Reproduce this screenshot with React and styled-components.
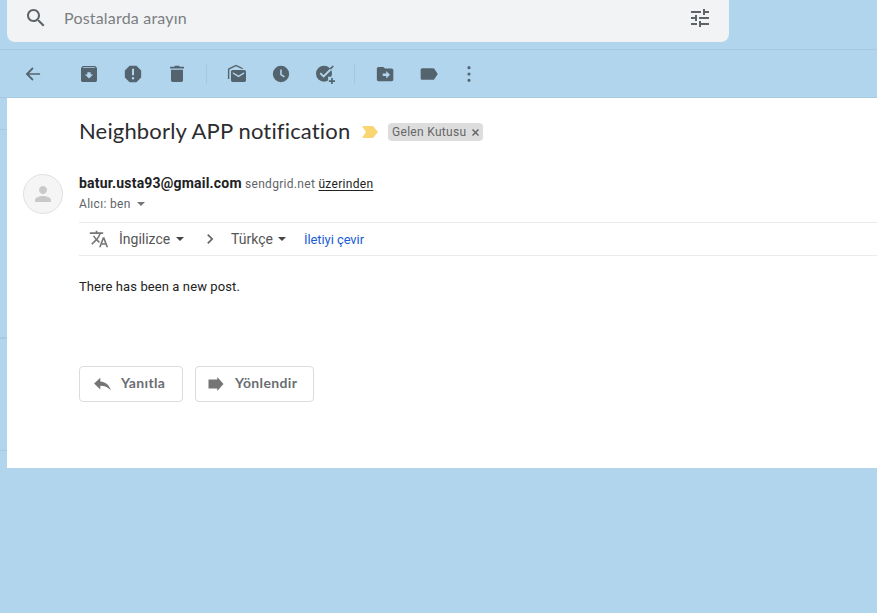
import React from "react";
import styled, { createGlobalStyle } from "styled-components";

const Global = createGlobalStyle`
  * { box-sizing: border-box; }
  body { margin: 0; background: #b1d5ed; font-family: Roboto, "Liberation Sans", sans-serif; overflow: hidden; }
`;

const Page = styled.div`
  width: 877px;
  height: 613px;
  background: #b1d5ed;
  overflow: hidden;
`;

const Header = styled.header`
  height: 50px;
  padding-left: 7px;
  border-bottom: 1px solid #a6c9e0;
`;

const SearchBox = styled.div`
  display: flex;
  align-items: center;
  width: 722px;
  height: 42px;
  padding: 0 17px 6px;
  border-radius: 0 0 8px 8px;
  background: #f1f3f4;
`;

const SearchText = styled.span`
  flex: 1;
  margin-left: 16px;
  font: 400 16px/24px Lato, sans-serif;
  letter-spacing: 0.2px;
  color: #7b7e82;
`;

const Svg = styled.svg`
  display: block;
  flex: none;
  width: ${(p) => p.$size}px;
  height: ${(p) => p.$size}px;
  fill: ${(p) => p.$color};
`;

const Toolbar = styled.nav`
  display: flex;
  align-items: center;
  height: 48px;
  padding-left: 11px;
  border-bottom: 1px solid #a6c9e0;
`;

const ToolButton = styled.button`
  display: flex;
  align-items: center;
  justify-content: center;
  width: ${(p) => p.$width || 44}px;
  height: 40px;
  margin: 0 ${(p) => p.$after || 0}px 0 0;
  padding: 0;
  border: 0;
  background: none;
`;

const Divider = styled.i`
  width: 1px;
  height: 20px;
  margin: 0 8px 0 7px;
  background: #a4c7df;
`;

const Main = styled.div`
  display: flex;
  height: 370px;
`;

const Rail = styled.aside`
  width: 7px;
  padding-top: 31px;
`;

const RailSection = styled.div`
  height: ${(p) => p.$height}px;
  border-top: ${(p) => p.$line || 1}px solid #a6c9e0;
`;

const Message = styled.main`
  flex: 1;
  padding-top: 16px;
  background: #fff;
`;

const SubjectRow = styled.div`
  display: flex;
  align-items: center;
  height: 36px;
  padding-left: 72px;
`;

const Subject = styled.h1`
  width: 283px;
  margin: 0;
  padding-bottom: 2px;
  font: 400 22px/28px Lato, sans-serif;
  letter-spacing: 0.16px;
  color: #2b2c2f;
  white-space: nowrap;
`;

const Importance = styled.svg`
  width: 16px;
  height: 12px;
  margin-right: 10px;
  fill: #f9d574;
`;

const Chip = styled.span`
  display: flex;
  align-items: center;
  width: 95px;
  height: 18px;
  padding: 0 4px;
  border-radius: 4px;
  background: #ddd;
  color: #666;
  font-size: 12px;
  letter-spacing: 0.3px;
  white-space: nowrap;
`;

const ChipClose = styled.svg`
  width: 7px;
  height: 7px;
  margin-left: auto;
  stroke: #666;
  stroke-width: 1.5;
`;

const SenderRow = styled.div`
  display: flex;
  height: 72px;
  padding: 24px 0 0 16px;
`;

const Avatar = styled.div`
  display: flex;
  align-items: center;
  justify-content: center;
  width: 40px;
  height: 40px;
  margin-right: 16px;
  border: 1px solid #e0e0e0;
  border-radius: 50%;
  background: #f5f5f5;
`;

const SenderLine = styled.div`
  height: 20px;
  font-size: 12px;
  line-height: 18px;
  letter-spacing: 0.3px;
  color: #5f6368;
  white-space: nowrap;
`;

const SenderName = styled.b`
  font-size: 14px;
  font-weight: 700;
  letter-spacing: 0.2px;
  color: #202124;
`;

const Via = styled.u`
  color: #222;
  text-underline-offset: 2px;
`;

const Recipient = styled.div`
  display: flex;
  align-items: center;
  gap: 6px;
  height: 20px;
  font-size: 12px;
  letter-spacing: 0.3px;
  color: #5f6368;
`;

const Caret = styled.i`
  border: 4px solid transparent;
  border-top-color: ${(p) => p.$color || "#444"};
  border-bottom: 0;
`;

const TranslateBar = styled.div`
  display: flex;
  align-items: center;
  height: 34px;
  margin-left: 72px;
  padding-left: 10px;
  border-top: 1px solid #ebebeb;
  border-bottom: 1px solid #ebebeb;
`;

const Language = styled.span`
  display: flex;
  align-items: center;
  justify-content: space-between;
  width: ${(p) => p.$width}px;
  margin-left: ${(p) => p.$before}px;
  font-size: 14px;
  color: #555;
`;

const TranslateLink = styled.a`
  margin-left: 18px;
  font-size: 13px;
  letter-spacing: -0.08px;
  color: #1a5cd6;
`;

const Body = styled.p`
  height: 110px;
  margin: 0;
  padding: 21px 0 0 72px;
  font-size: 13px;
  line-height: 20px;
  letter-spacing: 0.1px;
  color: #222;
`;

const Actions = styled.div`
  display: flex;
  gap: 12px;
  padding-left: 72px;
`;

const ActionButton = styled.button`
  display: flex;
  align-items: center;
  width: ${(p) => p.$width}px;
  height: 36px;
  padding: 0 0 0 ${(p) => p.$inset}px;
  border: 1px solid #dadce0;
  border-radius: 4px;
  background: #fff;
  color: #6a6e72;
  font: 700 14px/20px Lato, sans-serif;
  letter-spacing: 0.35px;
`;

const ActionLabel = styled.span`
  margin-left: 9px;
  padding-bottom: 2px;
`;

const PATHS = {
  search: "M15.5 14h-.79l-.28-.27C15.41 12.59 16 11.11 16 9.5 16 5.91 13.09 3 9.5 3S3 5.91 3 9.5 5.91 16 9.5 16c1.61 0 3.09-.59 4.23-1.57l.27.28v.79l5 4.99L20.49 19l-4.99-5zm-6 0C7.01 14 5 11.99 5 9.5S7.01 5 9.5 5 14 7.01 14 9.5 11.99 14 9.5 14z",
  tune: "M3 5h10v2H3zM15 3h2v2h4v2h-4v2h-2zM3 11h4V9h2v6H7v-2H3zM11 11h10v2H11zM3 17h6v2H3zM11 15h2v2h8v2h-8v2h-2z",
  back: "M20.500 11H7.300l5.300-5.300L11.200 4l-8 8 8 8 1.400-1.700L7.300 13h13.200z",
  archive: "M19.500 2.400h-15L2.400 4.800v14.600c0 1.200 1 2.200 2.200 2.200h14.800c1.200 0 2.200-1 2.200-2.200V4.800zM12 17.500l-5-5h3V9.800h4v2.700h3zM4.400 4.800l.8-.9h13.600l.8.9z",
  spam: "M16.1 2.200H7.900L2.200 7.900v8.200l5.700 5.700h8.200l5.700-5.700V7.900zM13.200 5.800v7.700h-2.400V5.800zM12 18.600a1.500 1.500 0 1 1 0-3 1.500 1.500 0 0 1 0 3z",
  trash: "M4.800 19.600c0 1.100.9 2 2 2h10.400c1.100 0 2-.9 2-2V7H4.800zM15.500 3.200l-1-1h-5l-1 1H3.600v2.200h16.800V3.200z",
  unread: "M19.500 5.700v-.5L10.800 1 2 5.200c-.6.300-.9.800-.9 1.500v11.400h1.700V6.500l8-3.800 6.300 3zM20.800 7.200h-14c-1.100 0-2 .9-2 2v10.400c0 1.100.9 2 2 2h14c1.100 0 2-.9 2-2V9.200c0-1.100-.9-2-2-2zm-.2 4.600-6.800 4-6.800-4v-2l6.800 4 6.800-4z",
  snooze: "M12 2.200a9.800 9.800 0 1 0 0 19.600 9.800 9.800 0 0 0 0-19.600zM15.500 16.200 11 13.200V6.500h1.900v5.700l3.800 2.500z",
  move: "M20 5.500h-8l-2-2H4.200c-1.100 0-2 .9-2 2v13.200c0 1.100.9 2 2 2H20c1.100 0 2-.9 2-2V7.500c0-1.100-.9-2-2-2zM13.500 17.500v-3H9.300v-3h4.200v-3L18 13z",
  label: "M16.800 5H4c-1.100 0-2 .9-2 2v10c0 1.100.9 2 2 2h12.800c.7 0 1.300-.3 1.600-.8L22.500 12l-4.100-6.200c-.3-.5-.9-.8-1.600-.8z",
  more: "M12 6.300a1.900 1.900 0 1 0 0-3.800 1.900 1.900 0 0 0 0 3.800zM12 13.900a1.900 1.900 0 1 0 0-3.800 1.900 1.900 0 0 0 0 3.800zM12 21.500a1.900 1.900 0 1 0 0-3.800 1.900 1.900 0 0 0 0 3.800z",
  person: "M12 12c2.210 0 4-1.790 4-4s-1.790-4-4-4-4 1.790-4 4 1.790 4 4 4zm0 2c-2.670 0-8 1.340-8 4v2h16v-2c0-2.660-5.330-4-8-4z",
  translate: "M12.870 15.070l-2.540-2.510.03-.03c1.740-1.940 2.980-4.170 3.710-6.530H17V4h-7V2H8v2H1v1.990h11.170C11.500 7.920 10.440 9.750 9 11.350 8.070 10.320 7.300 9.190 6.690 8h-2c.73 1.630 1.730 3.170 2.980 4.560l-5.090 5.020L4 19l5-5 3.110 3.110.76-2.040zM18.500 10h-2L12 22h2l1.120-3h4.750L21 22h2l-4.500-12zm-2.620 7l1.620-4.330L19.120 17h-3.240z",
  chevron: "M10 6 8.590 7.410 13.170 12l-4.580 4.590L10 18l6-6z",
  reply: "M10 9V4.500L2.500 11.500l7.500 7V14c5 0 9 1.300 12.500 5.500C21 14 17 9.500 10 9z",
  forward: "M3 6.500h10.500V3.500l7.500 8.500-7.500 8.500v-3H3z",
};

function Icon({ name, size = 20, color = "#54646f" }) {
  return (
    <Svg viewBox="0 0 24 24" $size={size} $color={color}>
      <path fillRule="evenodd" d={PATHS[name]} />
    </Svg>
  );
}

function TaskIcon() {
  return (
    <Svg viewBox="0 0 24 24" $size={20} $color="#54646f">
      <circle cx="10.800" cy="11.600" r="9.600" />
      <path d="M6.300 11l4 4L20.500 4.800" fill="none" stroke="#b1d5ed" strokeWidth="2.200" />
      <path d="M17.500 5.400l3.700-3.700 1.400 1.400-3.700 3.700z" />
      <path d="M15.700 15.200h8.300v8.800h-8.300z" fill="#b1d5ed" />
      <path d="M19.300 16.800h2v2.800H24v2h-2.700v2.400h-2v-2.400h-2.700v-2h2.700z" />
    </Svg>
  );
}

const Tool = ({ name, ...rest }) => (
  <ToolButton {...rest}><Icon name={name} /></ToolButton>
);

function Action({ icon, children, width, inset }) {
  return (
    <ActionButton $width={width} $inset={inset}>
      <Icon name={icon} size={20} color="#757575" />
      <ActionLabel>{children}</ActionLabel>
    </ActionButton>
  );
}

export default function App() {
  return (
    <Page>
      <Global />
      <Header>
        <SearchBox>
          <Icon name="search" size={24} color="#5f6368" />
          <SearchText>Postalarda arayın</SearchText>
          <Icon name="tune" size={24} color="#5f6368" />
        </SearchBox>
      </Header>
      <Toolbar>
        <Tool name="back" $after={12} />
        <Tool name="archive" />
        <Tool name="spam" />
        <Tool name="trash" />
        <Divider />
        <Tool name="unread" />
        <Tool name="snooze" />
        <ToolButton><TaskIcon /></ToolButton>
        <Divider />
        <Tool name="move" />
        <Tool name="label" />
        <Tool name="more" $width={36} />
      </Toolbar>
      <Main>
        <Rail>
          <RailSection $height={208} />
          <RailSection $height={113} $line={2} />
          <RailSection $height={18} />
        </Rail>
        <Message>
          <SubjectRow>
            <Subject>Neighborly APP notification</Subject>
            <Importance viewBox="0 0 16 12"><path d="M0 0h11l5 6-5 6H0l4-6z" /></Importance>
            <Chip>
              Gelen Kutusu
              <ChipClose viewBox="0 0 7 7"><path d="M.5.5l6 6M6.500.5l-6 6" /></ChipClose>
            </Chip>
          </SubjectRow>
          <SenderRow>
            <Avatar><Icon name="person" size={24} color="#c9c9c9" /></Avatar>
            <div>
              <SenderLine>
                <SenderName>batur.usta93@gmail.com</SenderName> sendgrid.net <Via>üzerinden</Via>
              </SenderLine>
              <Recipient>Alıcı: ben <Caret $color="#757575" /></Recipient>
            </div>
          </SenderRow>
          <TranslateBar>
            <Icon name="translate" size={20} color="#757575" />
            <Language $width={65} $before={10}>İngilizce <Caret /></Language>
            <Language $width={20} $before={16}><Icon name="chevron" color="#666" /></Language>
            <Language $width={55} $before={11}>Türkçe <Caret /></Language>
            <TranslateLink>İletiyi çevir</TranslateLink>
          </TranslateBar>
          <Body>There has been a new post.</Body>
          <Actions>
            <Action icon="reply" width={104} inset={12}>Yanıtla</Action>
            <Action icon="forward" width={119} inset={10}>Yönlendir</Action>
          </Actions>
        </Message>
      </Main>
    </Page>
  );
}
